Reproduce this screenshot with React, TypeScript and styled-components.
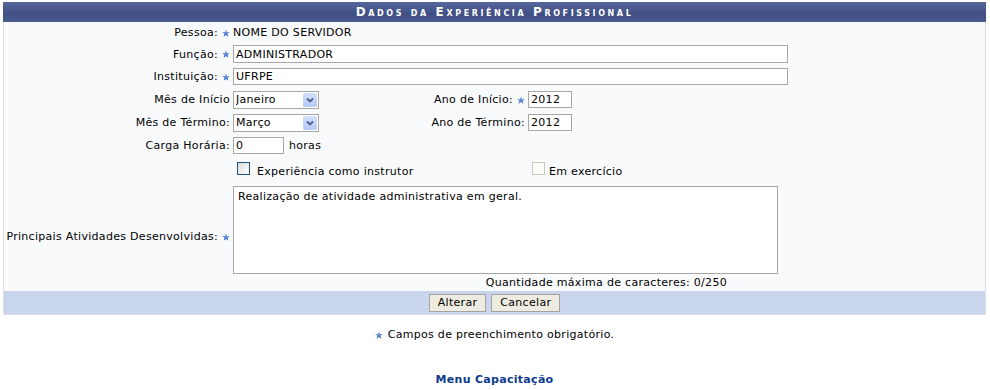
import styled, { createGlobalStyle } from "styled-components";

const GlobalStyle = createGlobalStyle`
  body {
    margin: 0;
    background: #ffffff;
    font-family: "DejaVu Sans", Verdana, sans-serif;
    font-size: 11px;
    letter-spacing: 0.3px;
    color: #000;
  }
`;

const Page = styled.div`
  padding: 2px 4px 0 3px;
`;

const Panel = styled.div`
  border: 1px solid #dcdee4;
  border-top: none;
  background: #f9fafc;
`;

const Caption = styled.div`
  height: 20px;
  line-height: 20px;
  margin: 0 -1px;
  text-align: center;
  color: #fff;
  font-size: 12px;
  font-weight: bold;
  font-variant: small-caps;
  letter-spacing: 2.6px;
  background: linear-gradient(#56679b 0%, #45558b 45%, #3f4f85 60%, #4c5c91 100%);
`;

const Row = styled.div<{ $h: number; $pad?: number }>`
  display: grid;
  grid-template-columns: 229px 198px 97px 1fr;
  box-sizing: border-box;
  height: ${(p) => p.$h}px;
  padding-top: ${(p) => p.$pad || 0}px;
  align-items: center;
`;

const Label = styled.div<{ $col?: number }>`
  grid-column: ${(p) => p.$col || 1};
  display: flex;
  justify-content: flex-end;
  align-items: center;
  gap: 4px;
  padding-right: 3px;
  white-space: nowrap;
`;

const Cell = styled.div<{ $span?: number; $col?: number }>`
  grid-column: ${(p) => (p.$col ? `${p.$col} / span ${p.$span || 1}` : `auto / span ${p.$span || 1}`)};
  display: flex;
  align-items: center;
  gap: 5px;
  white-space: nowrap;
`;

const StarSvg = styled.svg`
  width: 8px;
  height: 8px;
  flex: none;
`;

const Star = () => (
  <StarSvg viewBox="0 0 10 10">
    <defs>
      <linearGradient id="sg" x1="0" y1="0" x2="0" y2="1">
        <stop offset="0" stopColor="#9fbdf0" />
        <stop offset="1" stopColor="#2d5cc2" />
      </linearGradient>
    </defs>
    <polygon
      points="5,0.3 6.3,3.6 9.8,3.7 7,5.9 8,9.6 5,7.5 2,9.6 3,5.9 0.2,3.7 3.7,3.6"
      fill="url(#sg)"
    />
  </StarSvg>
);

const TextInput = styled.input<{ $w: number; $h?: number }>`
  box-sizing: border-box;
  width: ${(p) => p.$w}px;
  height: ${(p) => p.$h || 17}px;
  border: 1px solid #a7a7a7;
  background: #fff;
  padding: 0 2px;
  font: inherit;
  letter-spacing: inherit;
  color: #000;
  outline: none;
`;

const SelectWrap = styled.div`
  position: relative;
  width: 86px;
  height: 18px;
`;

const SelectBox = styled.select`
  box-sizing: border-box;
  appearance: none;
  width: 100%;
  height: 100%;
  border: 1px solid #a7a7a7;
  background: #fff;
  padding: 0 2px;
  font: inherit;
  letter-spacing: inherit;
  color: #000;
  outline: none;
`;

const SelectArrow = styled.span`
  position: absolute;
  right: 2px;
  top: 2px;
  width: 14px;
  height: 14px;
  border-radius: 2px;
  background: linear-gradient(#d3e0fc, #b4c9f6);
  display: flex;
  align-items: center;
  justify-content: center;
  pointer-events: none;
`;

const Select = ({ value }: { value: string }) => (
  <SelectWrap>
    <SelectBox defaultValue={value}>
      <option>{value}</option>
    </SelectBox>
    <SelectArrow>
      <svg width="8" height="6" viewBox="0 0 8 6">
        <path d="M1 1.5 L4 4.5 L7 1.5" stroke="#4d6185" strokeWidth="1.8" fill="none" />
      </svg>
    </SelectArrow>
  </SelectWrap>
);

const CheckBox = styled.span<{ $disabled?: boolean }>`
  box-sizing: border-box;
  display: inline-block;
  width: 13px;
  height: 13px;
  margin-bottom: 6px;
  border: 1px solid ${(p) => (p.$disabled ? "#cac8bb" : "#1c5180")};
  background: ${(p) =>
    p.$disabled ? "#fbfbf8" : "linear-gradient(135deg, #dcdcd7, #ffffff)"};
`;

const CheckLabel = styled.label<{ $indent: number; $gap: number }>`
  display: flex;
  align-items: center;
  gap: ${(p) => p.$gap}px;
  margin-left: ${(p) => p.$indent}px;
`;

const AreaRow = styled.div`
  display: grid;
  grid-template-columns: 229px 1fr;
  height: 109px;
  align-items: center;
`;

const AreaCell = styled.div`
  display: flex;
  flex-direction: column;
  align-self: start;
  padding-top: 4px;
  width: 545px;
`;

const TextArea = styled.textarea`
  box-sizing: border-box;
  width: 545px;
  height: 88px;
  border: 1px solid #a7a7a7;
  background: #fff;
  padding: 3px 4px;
  font: inherit;
  letter-spacing: inherit;
  color: #000;
  resize: none;
  outline: none;
`;

const Counter = styled.div`
  line-height: 17px;
  text-align: right;
  padding-right: 51px;
`;

const ButtonBar = styled.div`
  height: 23px;
  background: #c8d5ec;
  display: flex;
  justify-content: center;
  align-items: center;
  gap: 5px;
`;

const Button = styled.button`
  height: 18px;
  padding: 0 8px;
  border: 1px solid #a3a3a3;
  background: #eeebe0;
  font: inherit;
  letter-spacing: inherit;
  color: #000;
`;

const Note = styled.div`
  margin-top: 13px;
  line-height: 14px;
  display: flex;
  justify-content: center;
  align-items: center;
  gap: 5px;
`;

const MenuLink = styled.a`
  display: block;
  margin-top: 31px;
  line-height: 14px;
  text-align: center;
  font-weight: bold;
  color: #0d3a8c;
  text-decoration: none;
`;

export default function App() {
  return (
    <>
      <GlobalStyle />
      <Page>
        <Panel>
          <Caption>Dados da Experiência Profissional</Caption>

          <Row $h={21}>
            <Label>Pessoa: <Star /></Label>
            <Cell $span={3}>NOME DO SERVIDOR</Cell>
          </Row>
          <Row $h={22}>
            <Label>Função: <Star /></Label>
            <Cell $span={3}>
              <TextInput $w={555} $h={18} defaultValue="ADMINISTRADOR" />
            </Cell>
          </Row>
          <Row $h={23}>
            <Label>Instituição: <Star /></Label>
            <Cell $span={3}>
              <TextInput $w={555} defaultValue="UFRPE" />
            </Cell>
          </Row>
          <Row $h={23}>
            <Label>Mês de Início</Label>
            <Cell>
              <Select value="Janeiro" />
            </Cell>
            <Label $col={3}>Ano de Início: <Star /></Label>
            <Cell>
              <TextInput $w={44} defaultValue="2012" />
            </Cell>
          </Row>
          <Row $h={23}>
            <Label>Mês de Término:</Label>
            <Cell>
              <Select value="Março" />
            </Cell>
            <Label $col={3}>Ano de Término:</Label>
            <Cell>
              <TextInput $w={44} defaultValue="2012" />
            </Cell>
          </Row>
          <Row $h={23}>
            <Label>Carga Horária:</Label>
            <Cell $span={3}>
              <TextInput $w={51} defaultValue="0" />
              horas
            </Cell>
          </Row>
          <Row $h={25} $pad={3}>
            <Cell $col={2}>
              <CheckLabel $indent={4} $gap={7}>
                <CheckBox />
                Experiência como instrutor
              </CheckLabel>
            </Cell>
            <Cell $col={4}>
              <CheckLabel $indent={4} $gap={4}>
                <CheckBox $disabled />
                Em exercício
              </CheckLabel>
            </Cell>
          </Row>
          <AreaRow>
            <Label>Principais Atividades Desenvolvidas: <Star /></Label>
            <AreaCell>
              <TextArea defaultValue="Realização de atividade administrativa em geral." />
              <Counter>Quantidade máxima de caracteres: 0/250</Counter>
            </AreaCell>
          </AreaRow>

          <ButtonBar>
            <Button>Alterar</Button>
            <Button>Cancelar</Button>
          </ButtonBar>
        </Panel>

        <Note>
          <Star />
          Campos de preenchimento obrigatório.
        </Note>
        <MenuLink href="#">Menu Capacitação</MenuLink>
      </Page>
    </>
  );
}
